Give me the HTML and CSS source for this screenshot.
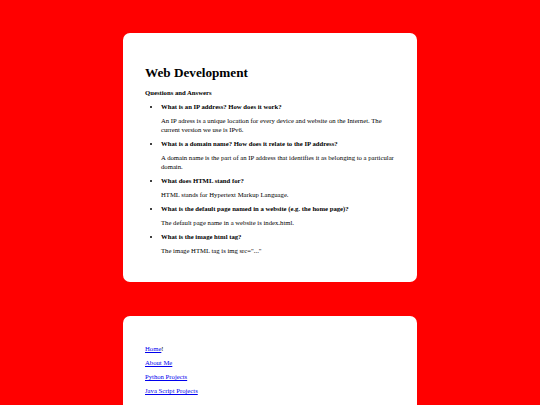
FILE: index.html
```html
<!DOCTYPE html>
<html>
<head>
<meta charset="utf-8">
<link rel="stylesheet" href="styles.css">
</head>
<body>
<main class="page">
  <section class="card qa">
    <h1 class="title">Web Development</h1>
    <h3 class="subtitle">Questions and Answers</h3>
    <ul class="list">
      <li>
        <h4 class="q">What is an IP address? How does it work?</h4>
        <p class="a">An IP adress is a unique location for every device and website on the Internet. The current version we use is IPv6.</p>
      </li>
      <li>
        <h4 class="q">What is a domain name? How does it relate to the IP address?</h4>
        <p class="a">A domain name is the part of an IP address that identifies it as belonging to a particular domain.</p>
      </li>
      <li>
        <h4 class="q">What does HTML stand for?</h4>
        <p class="a">HTML stands for Hypertext Markup Language.</p>
      </li>
      <li>
        <h4 class="q">What is the default page named in a website (e.g. the home page)?</h4>
        <p class="a">The default page name in a website is index.html.</p>
      </li>
      <li>
        <h4 class="q">What is the image html tag?</h4>
        <p class="a">The image HTML tag is img src="..."</p>
      </li>
    </ul>
  </section>
  <nav class="card nav">
    <p class="link-row"><a href="#">Home</a>!</p>
    <p class="link-row"><a href="#">About Me</a></p>
    <p class="link-row"><a href="#">Python Projects</a></p>
    <p class="link-row"><a href="#">Java Script Projects</a></p>
  </nav>
</main>
</body>
</html>
```
FILE: styles.css
```css
html, body {
  margin: 0;
  padding: 0;
}
body {
  background: #ff0000;
  font-family: "Liberation Serif", "Times New Roman", serif;
  font-size: 6.7px;
  line-height: 9px;
  color: #000;
}
.page {
  display: flex;
  flex-direction: column;
  align-items: center;
  gap: 34px;
  padding-top: 33px;
}
.card {
  background: #fff;
  width: 294px;
  box-sizing: border-box;
  border-radius: 7px;
  padding: 0 18px 0 22px;
}
.qa {
  padding-top: 32px;
  padding-bottom: 27px;
}
.title {
  font-size: 13.2px;
  line-height: 15px;
  font-weight: bold;
  margin: 0 0 8px;
}
.subtitle {
  font-size: 6.7px;
  font-weight: bold;
  margin: 0 0 5px;
}
.list {
  margin: 0;
  padding-left: 16px;
}
.list li {
  margin: 0 0 5px;
}
.list li:last-child {
  margin-bottom: 0;
}
.q {
  font-size: 6.7px;
  font-weight: bold;
  margin: 0 0 5px;
}
.a {
  margin: 0;
}
.nav {
  padding-top: 28px;
  padding-bottom: 30px;
}
.link-row {
  margin: 0 0 5px;
}
.link-row a {
  color: #0000ee;
}
```
